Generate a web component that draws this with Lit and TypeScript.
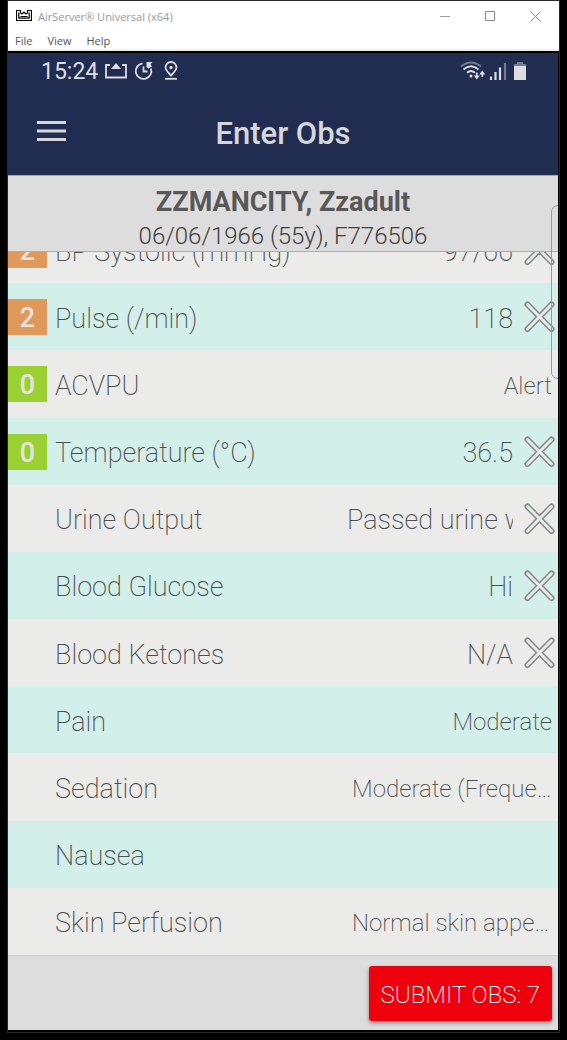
import { LitElement, html, css, svg, nothing } from "lit";
import { customElement, property } from "lit/decorators.js";

type Field = {
  label: string;
  value: string;
  score?: number;
  kind: "input" | "select";
};

const FIELDS: Field[] = [
  { label: "BP Systolic (mmHg)", value: "97/66", score: 2, kind: "input" },
  { label: "Pulse (/min)", value: "118", score: 2, kind: "input" },
  { label: "ACVPU", value: "Alert", score: 0, kind: "select" },
  { label: "Temperature (°C)", value: "36.5", score: 0, kind: "input" },
  { label: "Urine Output", value: "Passed urine w", kind: "input" },
  { label: "Blood Glucose", value: "Hi", kind: "input" },
  { label: "Blood Ketones", value: "N/A", kind: "input" },
  { label: "Pain", value: "Moderate", kind: "select" },
  { label: "Sedation", value: "Moderate (Frequently drowsy)", kind: "select" },
  { label: "Nausea", value: "", kind: "select" },
  { label: "Skin Perfusion", value: "Normal skin appearance", kind: "select" },
];

@customElement("obs-row")
export class ObsRow extends LitElement {
  @property({ attribute: false }) field!: Field;

  static styles = css`
    :host {
      display: flex;
      align-items: center;
      min-height: 0;
      padding: 1px 3px 0 0;
      color: #4c4f4f;
      font-weight: 200;
    }
    .score {
      flex: none;
      box-sizing: border-box;
      width: 39px;
      height: 36px;
      padding-top: 2px;
      margin-right: 8px;
      display: flex;
      align-items: center;
      justify-content: center;
      font-size: 27px;
      font-weight: 500;
      color: #e4e3df;
    }
    .s2 { background: #e0995b; }
    .s0 { background: #9ad032; }
    .label {
      flex: 1;
      padding-top: 3px;
      font-size: 27px;
      line-height: 36px;
      white-space: nowrap;
    }
    .value {
      box-sizing: border-box;
      border: 0;
      padding: 3px 0 0;
      margin: 0;
      background: none;
      border-radius: 0;
      outline: 0;
      color: inherit;
      font-family: inherit;
      font-weight: inherit;
      text-align: right;
      height: 39px;
    }
    .text {
      width: 166px;
      font-size: 27px;
    }
    .long { text-align: left; }
    .pick {
      width: 200px;
      margin-right: 3px;
      font-size: 24px;
      appearance: none;
      text-align-last: right;
      overflow: hidden;
      text-overflow: ellipsis;
      white-space: nowrap;
    }
    .clear {
      flex: none;
      display: flex;
      border: 0;
      padding: 0;
      margin-left: 11px;
      background: none;
    }
  `;

  render() {
    const f = this.field;
    return html`
      <span class="score ${f.score === undefined ? "" : `s${f.score}`}">${f.score ?? nothing}</span>
      <label class="label" for="v">${f.label}</label>
      ${f.kind === "input"
        ? html`<input id="v" class="value text ${f.value.length > 12 ? "long" : ""}" type="text" .value=${f.value} />
            <button class="clear" type="button" aria-label="Clear">
              <svg width="31" height="32" viewBox="0 0 31 32" fill="none" stroke-linecap="round">
                <path d="M3.500 3.500L27.500 28M27.500 3.500L3.500 28" stroke="#858888" stroke-width="6" />
                <path d="M3.500 3.500L27.500 28M27.500 3.500L3.500 28" stroke="#e6eae8" stroke-width="3" />
              </svg>
            </button>`
        : html`<select id="v" class="value pick"><option>${f.value}</option></select>`}
    `;
  }
}

const airserver = svg`<path d="M.5 2.500H4.500V5L6 6L8 4L10 6L11.500 5V2.500H15.500V12.500H.5Z" fill="none" stroke="#000" stroke-width="1.200"/>
  <path d="M2.800 4.500V10.200H13.200V4.500M4.500 8.500H11.500" fill="none" stroke="#000" stroke-width="1.200"/>`;

@customElement("app-root")
export class AppRoot extends LitElement {
  static styles = css`
    :host {
      display: flex;
      flex-direction: column;
      box-sizing: border-box;
      height: 100vh;
      padding: 0 7px 7px;
      background: #000;
      font-family: Roboto, sans-serif;
    }
    .frame {
      flex: 1;
      min-height: 0;
      display: flex;
      flex-direction: column;
      padding-bottom: 2px;
      border: 1px solid #2a2a2a;
    }
    .window {
      background: #fff;
      border-bottom: 2px solid #f0f0f0;
      margin-bottom: 2px;
      font-family: "Open Sans", "Noto Sans", sans-serif;
      font-size: 11px;
    }
    .titlebar {
      display: flex;
      align-items: center;
      height: 30px;
      padding: 0 1px 0 8px;
      color: #999;
    }
    .title { flex: 1; margin-left: 6px; }
    .win {
      width: 45px;
      height: 30px;
      padding: 0;
      border: 0;
      background: none;
      display: flex;
      align-items: center;
      justify-content: center;
    }
    .menu {
      display: flex;
      gap: 15px;
      height: 18px;
      padding-left: 7px;
      align-items: center;
    }
    .item {
      border: 0;
      padding: 2px 0 0;
      background: none;
      font: inherit;
      line-height: 18px;
      color: #555;
    }
    .phone {
      position: relative;
      flex: 1;
      min-height: 0;
      display: flex;
      flex-direction: column;
      margin-right: 1px;
      overflow: hidden;
      background: #ddd;
    }
    .status {
      display: flex;
      align-items: center;
      height: 36px;
      padding: 0 30px 0 33px;
      background: #202d50;
      color: #dcdde0;
      font-size: 23px;
    }
    .time { margin-right: 7px; }
    .spacer { flex: 1; }
    .nav {
      display: grid;
      grid-template-columns: 86px 1fr 86px;
      align-items: center;
      height: 86px;
      background: #202d50;
      color: #d6d7da;
    }
    .burger {
      border: 0;
      padding: 0;
      margin: 0 0 2px 29px;
      background: none;
      display: flex;
      justify-self: start;
    }
    .heading {
      margin: 2px 0 0;
      text-align: center;
      font-size: 31px;
      font-weight: 500;
    }
    .patient {
      display: flex;
      flex-direction: column;
      align-items: center;
      box-sizing: border-box;
      height: 77px;
      padding-top: 10px;
      border-top: 1px solid #aaa;
      border-bottom: 1px solid #aaa;
      color: #585858;
    }
    .name {
      margin: 0;
      font-size: 27px;
      line-height: 32px;
      font-weight: 700;
    }
    .details {
      margin: 0;
      font-size: 24px;
      line-height: 36px;
      font-weight: 300;
      color: #404040;
    }
    .viewport {
      flex: 1;
      min-height: 0;
      display: flex;
      flex-direction: column;
      overflow: hidden;
    }
    .rows {
      flex: 1;
      display: grid;
      grid-template-rows: repeat(11, 1fr);
      margin-top: -36px;
    }
    .row { background: #ebebe9; }
    .row:nth-child(even) { background: #d3efe9; }
    .footer {
      display: flex;
      justify-content: flex-end;
      padding: 10px 6px 9px;
      border-top: 1px solid #ccc;
    }
    .submit {
      height: 55px;
      padding: 2px 12px 0;
      border: 0;
      border-radius: 3px;
      background: #ee000c;
      color: #fff;
      font-family: inherit;
      font-size: 24px;
      font-weight: 200;
      box-shadow: 0 2px 4px #0006;
    }
    .edge {
      position: absolute;
      right: -11px;
      top: 152px;
      width: 16px;
      height: 172px;
      border: 1px solid #999;
      border-radius: 7px;
      pointer-events: none;
    }
  `;

  render() {
    return html`
      <div class="frame">
        <header class="window">
          <div class="titlebar">
            <svg width="16" height="16" viewBox="0 0 16 16">${airserver}</svg>
            <span class="title">AirServer® Universal (x64)</span>
            <button class="win" aria-label="Minimize">
              <svg width="11" height="11"><path d="M0 5.500H10" stroke="#999" /></svg>
            </button>
            <button class="win" aria-label="Maximize">
              <svg width="11" height="11"><path d="M.5 .5H9.500V9.500H.5Z" fill="none" stroke="#888" /></svg>
            </button>
            <button class="win" aria-label="Close">
              <svg width="11" height="11"><path d="M.5 .5L10.500 10.500M10.500 .5L.5 10.500" stroke="#888" /></svg>
            </button>
          </div>
          <nav class="menu">
            <button class="item">File</button>
            <button class="item">View</button>
            <button class="item">Help</button>
          </nav>
        </header>
        <main class="phone">
          <div class="status">
            <span class="time">15:24</span>
            <svg width="76" height="22" viewBox="0 0 76 22" fill="none" stroke="#dcdde0" stroke-width="1.800">
              <path d="M5 5H1V17.500H21V5H17" />
              <path d="M6 9L11 3L16 9Z" fill="#dcdde0" stroke="none" />
              <path d="M37.500 3.400A7.800 7.800 0 1 0 45.900 8.500M38.500 6.500V11.500H42.500" />
              <path d="M41.500 2H47.500L45.500 4.200L47 6.500L43.500 8.500L41.500 7Z" fill="#dcdde0" stroke="none" />
              <path d="M60 18.800H72" />
              <path d="M66 15.500C62.500 12 60.500 10 60.500 7.500A5.500 5.500 0 0 1 71.500 7.500C71.500 10 69.500 12 66 15.500Z" />
              <circle cx="66" cy="7.500" r="1.700" fill="#dcdde0" stroke="none" />
            </svg>
            <span class="spacer"></span>
            <svg width="68" height="22" viewBox="0 0 68 22" fill="none" stroke="#dcdde0" stroke-width="1.900">
              <path d="M1 6.500Q11 -1.500 21 6.500" stroke="#747c92" />
              <path d="M3.500 9.500Q11 3 18.500 9.500M7 12.800Q11 9 15 12.800" />
              <circle cx="11" cy="16" r="1.500" fill="#dcdde0" stroke="none" />
              <path d="M16.800 12.500V18M22.300 17V12" stroke-width="1.700" />
              <path d="M13.800 15.500H19.800L16.800 19.500ZM19.300 14.500H25.300L22.300 10.500Z" fill="#dcdde0" stroke="none" />
              <path d="M31 20V16.500M35.500 20V12M40 20V7.500" stroke-width="2.200" />
              <path d="M45 20V3" stroke="#747c92" stroke-width="2.200" />
              <path d="M57 2H63V4H66V6H54V4H57Z" fill="#747c92" stroke="none" />
              <path d="M54 6H66V20H54Z" fill="#dcdde0" stroke="none" />
            </svg>
          </div>
          <div class="nav">
            <button class="burger" aria-label="Menu">
              <svg width="29" height="20" viewBox="0 0 29 20">
                <path d="M0 1.500H29M0 10H29M0 18.500H29" stroke="#d6d7da" stroke-width="3" />
              </svg>
            </button>
            <h1 class="heading">Enter Obs</h1>
          </div>
          <section class="patient">
            <h2 class="name">ZZMANCITY, Zzadult</h2>
            <p class="details">06/06/1966 (55y), F776506</p>
          </section>
          <div class="viewport">
            <form class="rows">
              ${FIELDS.map((f) => html`<obs-row class="row" .field=${f}></obs-row>`)}
            </form>
          </div>
          <footer class="footer">
            <button class="submit" type="button">SUBMIT OBS: 7</button>
          </footer>
          <div class="edge"></div>
        </main>
      </div>
    `;
  }
}
